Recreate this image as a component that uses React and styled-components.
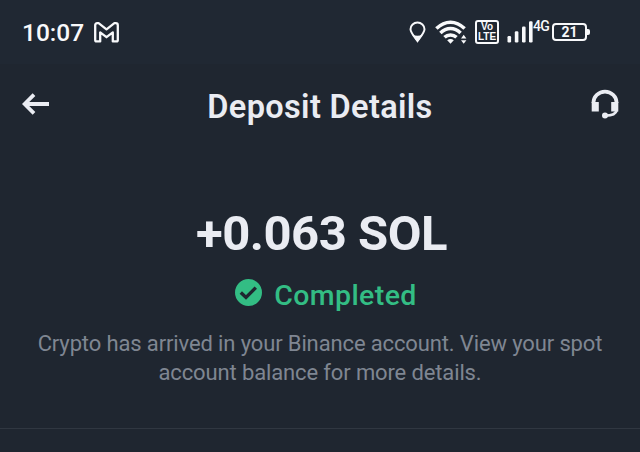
import React from "react";
import styled, { createGlobalStyle } from "styled-components";


const GlobalStyle = createGlobalStyle`
    * {
        box-sizing: border-box;
    }

    body {
        margin: 0;
        background: #1f2630;
        font-family: Roboto, "Liberation Sans", sans-serif;
        color: #eaecf2;
    }
`;

const Screen = styled.div`
    width: 100%;
    height: 452px;
    overflow: hidden;
    display: flex;
    flex-direction: column;
    background: #1f2630;
`;

const StatusBar = styled.div`
    height: 64px;
    flex: none;
    padding: 0 50px 0 22px;
    display: flex;
    align-items: center;
    justify-content: space-between;
    background: #202833;
    color: #f8f9fb;
`;

const StatusGroup = styled.div`
    display: flex;
    align-items: center;
`;

const Clock = styled.span`
    width: 72px;
    font-size: 24.5px;
    font-weight: 500;
    line-height: 28px;
    padding-top: 2px;
`;

const Icon = styled.svg`
    display: block;
    flex: none;
    margin-left: ${(props) => props.$gap || 0}px;
`;

const VolteBadge = styled.div`
    width: 24px;
    height: 24px;
    margin-left: 8px;
    border: 2px solid #f8f9fb;
    border-radius: 3px;
    display: flex;
    flex-direction: column;
    align-items: center;
    justify-content: center;
    font-family: "Liberation Sans", sans-serif;
    font-size: 10px;
    font-weight: 700;
    line-height: 10px;
`;

const NetworkType = styled.span`
    width: 18px;
    height: 24px;
    font-size: 14px;
    font-weight: 500;
    line-height: 12px;
    letter-spacing: -0.8px;
    white-space: nowrap;
`;

const Battery = styled.div`
    width: 35px;
    height: 18px;
    margin-left: 1px;
    border: 2px solid #f8f9fb;
    border-radius: 4px;
    display: flex;
    align-items: center;
    justify-content: center;
    font-size: 14px;
    font-weight: 700;
    line-height: 14px;
`;

const BatteryTip = styled.div`
    width: 3px;
    height: 6px;
    border-radius: 0 2px 2px 0;
    background: #f8f9fb;
`;

const Header = styled.div`
    height: 84px;
    flex: none;
    padding: 0 21px 5px 22px;
    display: flex;
    align-items: center;
    justify-content: space-between;
`;

const Title = styled.h1`
    margin: 0;
    padding-top: 7px;
    font-size: 32.5px;
    font-weight: 600;
    line-height: 38px;
    letter-spacing: 0.35px;
    white-space: nowrap;
`;

const Summary = styled.div`
    height: 281px;
    flex: none;
    padding-top: 56px;
    display: flex;
    flex-direction: column;
    align-items: center;
    border-bottom: 1px solid #303741;
`;

const Amount = styled.div`
    padding-left: 3px;
    font-size: 49px;
    font-weight: 700;
    line-height: 60px;
    letter-spacing: -0.5px;
    white-space: nowrap;
`;

const Status = styled.div`
    height: 40px;
    margin-top: 11px;
    padding-left: 12px;
    display: flex;
    align-items: center;
    gap: 12px;
    font-size: 28.5px;
    font-weight: 500;
    letter-spacing: 0.4px;
    color: #33bd84;

    svg {
        margin-bottom: 5px;
    }
`;

const Description = styled.p`
    margin: 14px 0 0;
    font-size: 22px;
    font-weight: 400;
    line-height: 29px;
    letter-spacing: -0.13px;
    text-align: center;
    white-space: nowrap;
    color: #7f8692;
`;


function MailIcon() {
    return (
        <Icon width="25" height="21" viewBox="0 0 25 21" fill="none" stroke="currentColor" strokeWidth="2.3" strokeLinejoin="round">
            <path d="M1.2 3.2Q1.2 1.2 3.2 1.2H4.6L12.5 7.3L20.4 1.2H21.8Q23.8 1.2 23.8 3.2V18Q23.8 19.4 22.5 19.4H18.8V10.4L12.5 15.2L6.2 10.4V19.4H2.5Q1.2 19.4 1.2 18Z" />
        </Icon>
    );
}

function PinIcon() {
    return (
        <Icon width="17" height="22" viewBox="0 0 17 22">
            <path d="M8.5 1.6C4.7 1.6 1.5 4.4 1.5 8.3C1.5 11.4 4 14.2 8.5 20C13 14.2 15.5 11.4 15.5 8.3C15.5 4.4 12.3 1.6 8.5 1.6Z" fill="none" stroke="currentColor" strokeWidth="2" />
            <path d="M3.2 13.2Q8.5 16.4 13.8 13.2L8.5 21.4Z" fill="currentColor" />
        </Icon>
    );
}

function WifiIcon() {
    return (
        <Icon $gap={9} width="32" height="25" viewBox="0 0 32 25">
            <g fill="none" stroke="currentColor" strokeWidth="3.5">
                <path d="M1.4 8.6Q8 2.2 15.5 2.2T29.6 8.6" />
                <path d="M5.4 13.1Q10 8.6 15.5 8.6T25.6 13.1" />
                <path d="M9.5 17.3Q12 14.9 15.5 14.9T21.5 17.3" />
            </g>
            <path d="M12.2 20.2Q15.5 17.8 18.8 20.2L15.5 23.8Z" fill="currentColor" />
            <path d="M26 18.4L28.7 14.8L31.4 18.4ZM26 20.2H31.4L28.7 23.8Z" fill="currentColor" />
        </Icon>
    );
}

function SignalIcon() {
    return (
        <Icon $gap={8} width="26" height="24" viewBox="0 0 26 24" fill="currentColor">
            <rect x="0.5" y="16" width="3.6" height="6.5" rx="1.2" />
            <rect x="7.8" y="11.2" width="3.6" height="11.3" rx="1.2" />
            <rect x="15" y="6.5" width="3.6" height="16" rx="1.2" />
            <rect x="22" y="1.2" width="3.6" height="21.3" rx="1.2" />
        </Icon>
    );
}

function BackIcon() {
    return (
        <Icon width="27" height="22" viewBox="0 0 27 22" fill="none" stroke="currentColor" strokeWidth="3.8">
            <path d="M12 1.6L2.6 11L12 20.4M2.6 11H27" />
        </Icon>
    );
}

function SupportIcon() {
    return (
        <Icon width="28" height="31" viewBox="0 -2 28 31">
            <path d="M2.4 13V12.8A11.6 11.2 0 0 1 25.6 12.8V13" fill="none" stroke="currentColor" strokeWidth="3.6" />
            <path d="M0.7 12H7.8V21.4H0.7ZM20.2 12H27.3V21.4H20.2Z" fill="currentColor" />
            <path d="M25.6 20.5Q24.4 25.6 14.5 25.6" fill="none" stroke="currentColor" strokeWidth="2.8" />
            <circle cx="14" cy="25.5" r="3" fill="currentColor" />
        </Icon>
    );
}

function CompletedIcon() {
    return (
        <Icon width="27" height="27" viewBox="0 0 27 27">
            <circle cx="13.5" cy="13.5" r="13.5" fill="#33bd84" />
            <path d="M5.8 13.4L11 18.4L20.8 8.6" fill="none" stroke="#1f2630" strokeWidth="3.4" />
        </Icon>
    );
}


export default function App() {
    return (
        <Screen>
            <GlobalStyle />
            <StatusBar>
                <StatusGroup>
                    <Clock>10:07</Clock>
                    <MailIcon />
                </StatusGroup>
                <StatusGroup>
                    <PinIcon />
                    <WifiIcon />
                    <VolteBadge>
                        <span>Vo</span>
                        <span>LTE</span>
                    </VolteBadge>
                    <SignalIcon />
                    <NetworkType>4G</NetworkType>
                    <Battery>21</Battery>
                    <BatteryTip />
                </StatusGroup>
            </StatusBar>

            <Header>
                <BackIcon />
                <Title>Deposit Details</Title>
                <SupportIcon />
            </Header>

            <Summary>
                <Amount>+0.063 SOL</Amount>
                <Status>
                    <CompletedIcon />
                    <span>Completed</span>
                </Status>
                <Description>
                    Crypto has arrived in your Binance account. View your spot <br />
                    account balance for more details.
                </Description>
            </Summary>
        </Screen>
    );
}
